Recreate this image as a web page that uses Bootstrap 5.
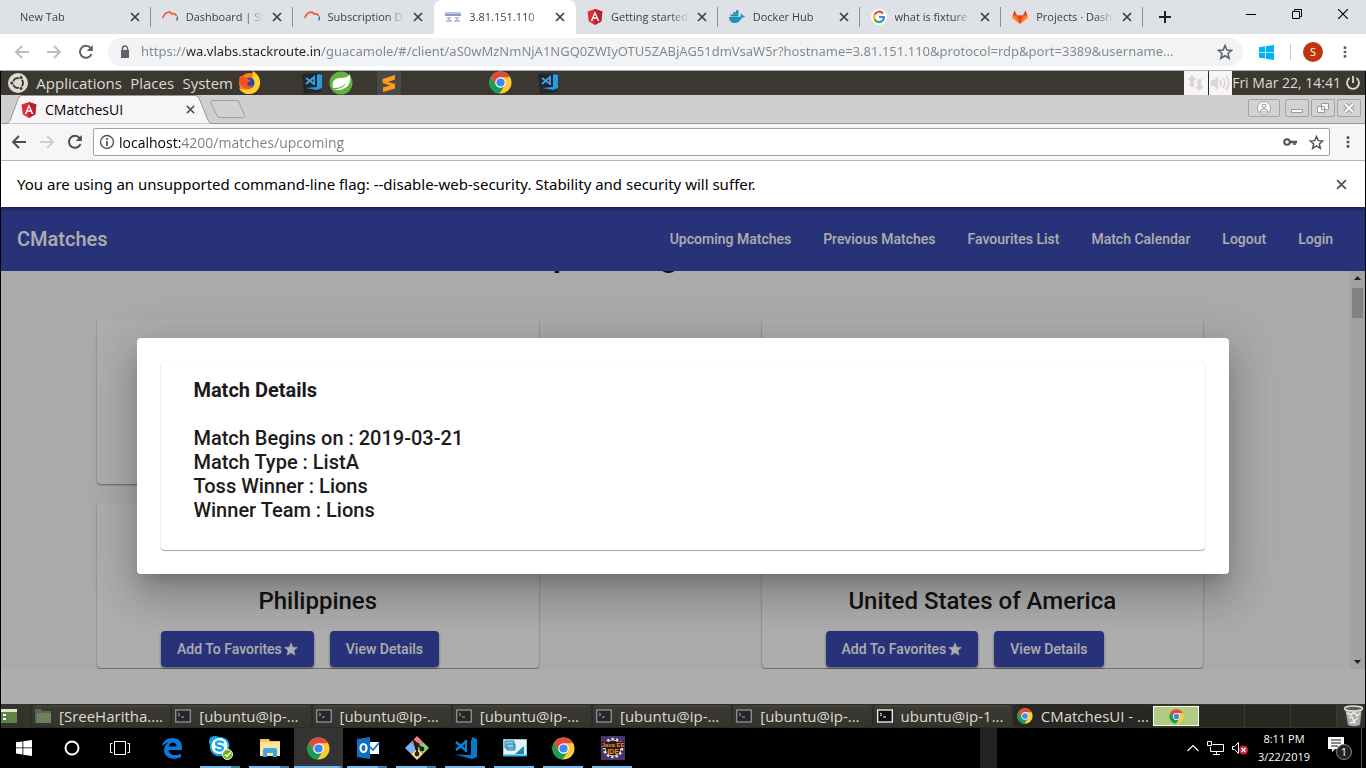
<!DOCTYPE html>
<html lang="en">
<head>
<meta charset="utf-8">
<meta name="viewport" content="width=device-width, initial-scale=1">
<title>CMatchesUI</title>
<link href="https://cdn.jsdelivr.net/npm/bootstrap@5.3.0/dist/css/bootstrap.min.css" rel="stylesheet">
<style>
  body { font-family: "Open Sans", sans-serif; background: #000; }
  svg { display: block; flex: none; }
  button { padding: 0; border: 0; background: none; color: inherit; }
  a { text-decoration: none; color: inherit; }

  /* outer browser */
  .tabstrip { height: 34px; background: #dee1e6; font-size: 11px; color: #3c4043; padding-left: 9px; }
  .tabset { flex: 0 1 1134px; min-width: 0; }
  .btab { flex: 1 1 0; min-width: 0; padding: 0 11px; position: relative; }
  .btab.ruled::after { content: ""; position: absolute; right: 0; top: 7px; height: 20px; width: 1px; background: #8b8f94; }
  .btab.active { background: #fff; border-radius: 8px 8px 0 0; }
  .tabname { flex: 1; min-width: 0; white-space: nowrap; overflow: hidden; -webkit-mask-image: linear-gradient(90deg, #000 75%, transparent); }
  .winctl { width: 46px; height: 28px; }
  .browserbar { height: 37px; background: #fff; border-bottom: 1px solid #a9abae; padding-right: 19px; padding-left: 14px; }
  .omni { height: 28px; border-radius: 14px; background: #f1f3f4; padding: 0 10px 0 9px; margin-left: -2px; }
  .address { border: 0; outline: 0; padding: 0; min-width: 0; color: transparent; -webkit-background-clip: text; background-clip: text; }
  .address-outer { font-family: "Noto Sans", sans-serif; font-size: 13px; background-image: linear-gradient(90deg, #80868b 46px, #202124 46px, #202124 180px, #80868b 180px); }
  .address-inner { font-size: 14px; background-image: linear-gradient(90deg, #000 62px, #7d7d7d 62px); }
  .avatar { width: 20px; height: 20px; background: #bf360c; color: #fff; font-size: 11px; }

  /* remote desktop */
  .remote { border-left: 1px solid #000; border-right: 1px solid #000; min-height: 0; }
  .toppanel { height: 24px; background: #3a3831; color: #dfdbd2; font-size: 15px; line-height: 20px; padding-bottom: 1px; }
  .datetime { font-size: 14px; }
  .menuset { width: 232px; padding-left: 7px; }
  .launch { width: 24px; height: 24px; }
  .tray { width: 24px; height: 24px; background: #f7f4f7; color: #dbd7d0; }
  .innertabs { height: 29px; background: #cfcfcf; border-bottom: 1px solid #979797; padding-left: 5px; }
  .innertab { width: 207px; height: 29px; position: relative; font-size: 14px; color: #000; }
  .innertab .shape { position: absolute; left: 0; top: 0; }
  .innertab .inside { position: relative; padding: 0 18px 0 15px; }
  .plus { margin-left: -3px; }
  .frames { gap: 2px; }
  .frame { height: 18px; width: 24px; border: 1px solid #a4a4a4; border-radius: 2px; background: #d2d2d2; color: #fff; }
  .frame-wide { width: 32px; margin-right: 3px; }
  .innerbar { height: 37px; background: #f8f5f8; border-bottom: 1px solid #b6b4b6; padding-left: 10px; padding-right: 11px; }
  .urlbox { height: 28px; border: 1px solid #a2a2a2; border-radius: 2px; background: #fff; padding: 0 5px; margin-left: 2px; }
  .infobar { font-family: "Noto Sans", sans-serif; height: 46px; background: #fff; color: #000; font-size: 15px; padding: 0 14px 0 16px; }

  /* web application */
  .app { font-family: Roboto, sans-serif; position: relative; background: #fff; min-height: 0; overflow: hidden; color: #1b1b1b; }
  .appnav { height: 64px; background: linear-gradient(#283573, #3c4bb3 5px); color: #fff; font-weight: 500; font-size: 14px; padding: 0 32px 0 16px; }
  .brand { font-size: 20px; }
  .viewport { background: #fdfafd; min-height: 0; overflow: hidden; }
  .listing { min-width: 0; padding: 0 147px 0 96px; }
  .listing h1 { font-size: 32px; line-height: 40px; font-weight: 700; margin: -35px -42px 43px 0; text-align: center; }
  .matchgrid { display: grid; grid-template-columns: 1fr 1fr; column-gap: 223px; row-gap: 19px; grid-auto-rows: 165px; }
  .matchcard { background: #fff; border-radius: 4px; box-shadow: 0 1px 2px 0 rgba(0,0,0,.45); padding: 0 64px 1px; }
  .matchcard h2 { font-size: 24px; line-height: 32px; font-weight: 500; margin: 0 0 14px; white-space: nowrap; text-align: center; }
  .actbtn { height: 36px; border-radius: 4px; background: #3c4bb3; color: #fff; font-size: 14px; font-weight: 500; padding: 0 16px; gap: 2px; white-space: nowrap; box-shadow: 0 2px 3px rgba(0,0,0,.4); }
  .rail { width: 15px; background: #f1eff1; color: #333; }
  .grip { width: 11px; height: 30px; background: #c1bfc1; }
  .pagefoot { height: 35px; background: #fff; }
  .shade { position: absolute; inset: 0; background: rgba(0,0,0,.32); }
  .dialogbox { width: 80%; background: #fff; border-radius: 4px; padding: 24px; box-shadow: 0 11px 15px -7px rgba(0,0,0,.2), 0 24px 38px 3px rgba(0,0,0,.14), 0 9px 46px 8px rgba(0,0,0,.12); }
  .detail { border-radius: 4px; padding: 16px 32px 28px; font-size: 20px; line-height: 24px; font-weight: 500; box-shadow: 0 1px 1px rgba(0,0,0,.35), 0 0 1px rgba(0,0,0,.2); }
  .detail h2 { font-size: 20px; line-height: 24px; font-weight: 700; margin-bottom: 24px; }

  /* remote desktop window list */
  .winlist { height: 24px; background: #33322b; color: #dfdbd2; font-size: 15px; line-height: 20px; }
  .task { flex: 1 1 0; min-width: 0; height: 24px; border: 1px solid #2c2b26; border-radius: 4px; background: linear-gradient(#46443c, #3a3832 4px, #35332e); padding: 0 3px; white-space: nowrap; }
  .task.current { background: #282723; }
  .taskset { flex: 0 1 1122px; min-width: 0; }
  .space { width: 46px; height: 22px; background: #282822; border-right: 1px solid #3b3a33; }
  .space.current { height: 20px; background: #afcd80; border: 1px solid #fff; }

  /* host taskbar */
  .hostbar { height: 40px; background: #000; color: #fff; font-size: 11px; }
  .sys { width: 48px; height: 40px; }
  .pins { margin-left: 3px; }
  .pin { width: 49px; height: 40px; position: relative; }
  .pin.open::after { content: ""; position: absolute; left: 4px; bottom: 0; width: 40px; height: 2px; background: #76b9ed; }
  .pin.multi::after { background: linear-gradient(90deg, #76b9ed 31px, #4c7ba0 31px); }
  .pin.front { background: #333; }
  .pin.front::after { left: 0; width: 48px; background: linear-gradient(90deg, #76b9ed 45px, #5a8fb9 45px); }
  .stub { width: 17px; background: #232323; margin-right: 186px; }
  .clock { width: 62px; line-height: 18px; text-align: center; }
  .edge { width: 1px; height: 40px; background: #555; }
</style>
</head>
<body class="vh-100 d-flex flex-column overflow-hidden">

<svg width="0" height="0" class="position-absolute" aria-hidden="true">
  <symbol id="x" viewBox="0 0 10 10"><path d="M1 1 9 9M9 1 1 9" stroke="currentColor" stroke-width="1.7" fill="none"/></symbol>
  <symbol id="route" viewBox="0 0 16 16"><path d="M.5 9C1.500 8 2 5 4.500 3.800 7 2.600 9 3.200 10 5c1.500-.5 3.500-.3 4.500 2" fill="none" stroke="#f4592b" stroke-width="1.700"/><path d="M15 7.500c.7 1.500.3 2.800-.4 4" stroke="#3c7288" stroke-width="1.400" fill="none"/></symbol>
  <symbol id="fwd" viewBox="0 0 16 16"><path d="M1 8h13M8 2l6 6-6 6" fill="none" stroke="currentColor" stroke-width="1.900"/></symbol>
  <symbol id="back" viewBox="0 0 16 16"><path d="M15 8H2M8 2 2 8l6 6" fill="none" stroke="currentColor" stroke-width="1.900"/></symbol>
  <symbol id="reload" viewBox="0 0 16 16"><path d="M13.500 10.200A6 6 0 1 1 12.600 4" fill="none" stroke="currentColor" stroke-width="2"/><path d="M14.800 1v6h-6z" fill="currentColor"/></symbol>
  <symbol id="star" viewBox="0 0 16 16"><path d="m8 1.600 1.900 4.400 4.700.4-3.600 3.100 1.100 4.700L8 11.700l-4.100 2.500L5 9.500 1.400 6.400l4.700-.4z" fill="none" stroke="currentColor" stroke-width="1.600"/></symbol>
  <symbol id="starfull" viewBox="0 0 16 16"><path d="m8 1 2 4.900 5.300.4-4 3.500 1.200 5.200L8 12.200 3.500 15l1.200-5.200-4-3.500L6 5.900z" fill="currentColor" stroke="currentColor" stroke-width=".6"/></symbol>
  <symbol id="dots" viewBox="0 0 4 16"><path d="M.5 1.500h3v3h-3zM.5 6.500h3v3h-3zM.5 11.500h3v3h-3z" fill="currentColor"/></symbol>
  <symbol id="ng" viewBox="0 0 16 16"><path d="M8 0l7.400 2.600-1.100 9.600L8 16l-6.300-3.800L.6 2.600z" fill="#dd2c3a"/><path d="M8 0v16l6.300-3.800 1.100-9.600z" fill="#b9202f"/><path d="M8 2.200 3.700 12h1.700l.9-2.200h3.400l.9 2.200h1.700zm0 3 1.200 3.100H6.800z" fill="#fff"/></symbol>
  <symbol id="chrome" viewBox="0 0 24 24"><circle cx="12" cy="12" r="11.500" fill="#fc3"/><path d="M2 6.300A11.500 11.500 0 0 1 22 6.500H12L7 15z" fill="#dd4b3e"/><path d="M2 6.300A11.500 11.500 0 0 0 11 23.500L16.500 15 7 14.700z" fill="#149e5a"/><circle cx="12" cy="12" r="5.500" fill="#fff"/><circle cx="12" cy="12" r="4.300" fill="#4285f4"/></symbol>
  <symbol id="code" viewBox="0 0 24 24"><path d="M18 1l5 2v18l-5 2L1 18.500l16 .5V6z" fill="#0b78c8"/><path d="M2 6 13 15.500M2 14 13 4.500" fill="none" stroke="#0b7fd3" stroke-width="2.500"/><path d="M12 4v12" stroke="#0b7fd3" stroke-width="2"/></symbol>
  <symbol id="codedark" viewBox="0 0 24 24"><path d="M1 3l18-1 1 19-17 2z" fill="#23272b"/><path d="M17 3l4 1v13l-5 2-11-2 11-1V4z" fill="#269be6"/><path d="M5 7l8 6M5 13l8-7v8" fill="none" stroke="#3ba4e8" stroke-width="1.800"/></symbol>
  <symbol id="term" viewBox="0 0 16 14"><rect x=".7" y="1" width="14.600" height="12" fill="#24262a" stroke="#8d8c88" stroke-width="1.400"/><path d="m3 4 2 1.500L3 7M6 8h3" fill="none" stroke="#aaa"/></symbol>
  <symbol id="winlogo" viewBox="0 0 16 16"><path d="M0 2.300 6.500 1.400v6.100H0zM7.300 1.300 16 0v7.500H7.300zM0 8.300h6.500v6.200L0 13.600zM7.300 8.300H16V16l-8.700-1.300z" fill="currentColor"/></symbol>
</svg>

<!-- outer browser tabs -->
<header class="tabstrip d-flex flex-shrink-0">
  <div class="tabset d-flex">
    <div class="btab ruled d-flex align-items-center gap-2"><span class="tabname">New Tab</span><button aria-label="Close tab"><svg width="10" height="10"><use href="#x"/></svg></button></div>
    <div class="btab ruled d-flex align-items-center gap-2"><svg width="16" height="16"><use href="#route"/></svg><span class="tabname">Dashboard | St</span><button aria-label="Close tab"><svg width="10" height="10"><use href="#x"/></svg></button></div>
    <div class="btab d-flex align-items-center gap-2"><svg width="16" height="16"><use href="#route"/></svg><span class="tabname">Subscription D</span><button aria-label="Close tab"><svg width="10" height="10"><use href="#x"/></svg></button></div>
    <div class="btab active d-flex align-items-center gap-2"><svg width="16" height="16" viewBox="0 0 16 16"><path d="M0 5h16v2H0z" fill="#8f9cc9"/><path d="M0 4h16M2 9h4M10 9h4M1 12h6M9 12h6M4 9v3M12 9v3" stroke="#a9b4d9" stroke-width="1.300"/></svg><span class="tabname">3.81.151.110</span><button aria-label="Close tab"><svg width="10" height="10"><use href="#x"/></svg></button></div>
    <div class="btab ruled d-flex align-items-center gap-2"><svg width="16" height="16"><use href="#ng"/></svg><span class="tabname">Getting started</span><button aria-label="Close tab"><svg width="10" height="10"><use href="#x"/></svg></button></div>
    <div class="btab ruled d-flex align-items-center gap-2"><svg width="16" height="16" viewBox="0 0 16 16"><path d="M0 8h11c1-1 .5-2.500 1-3.500 1 .5 1.500 1.500 1.500 2 1 0 2 0 2.500.5-.5 1-1.500 1.500-3 1.500C11.500 12 9 14 5.500 14 2 14 0 11.500 0 8z" fill="#1c93ba"/><path d="M1.500 5.500h8v2h-8zM4 3.300h5.500v2H4zM7 1.300h2.500v2H7z" fill="#2c8ca8"/></svg><span class="tabname">Docker Hub</span><button aria-label="Close tab"><svg width="10" height="10"><use href="#x"/></svg></button></div>
    <div class="btab ruled d-flex align-items-center gap-2"><svg width="16" height="16" viewBox="0 0 16 16"><circle cx="8" cy="8" r="8" fill="#fff"/><g fill="none" stroke-width="2.200"><path d="M12 4.500A5 5 0 0 0 3.600 5.700" stroke="#ea4335"/><path d="M3.600 5.700a5 5 0 0 0 0 4.600" stroke="#fbbc05"/><path d="M3.600 10.300a5 5 0 0 0 7.800 1.500" stroke="#34a853"/><path d="M11.400 11.800A5 5 0 0 0 13 8H8" stroke="#4285f4"/></g></svg><span class="tabname">what is fixture</span><button aria-label="Close tab"><svg width="10" height="10"><use href="#x"/></svg></button></div>
    <div class="btab ruled d-flex align-items-center gap-2"><svg width="16" height="16" viewBox="0 0 16 16"><path d="M0 9 2.500 1.500 5 6.500h6l2.500-5L16 9l-8 6z" fill="#fc6d26"/><path d="M5 6.500h6L8 15zM2.500 1.500 5 6.500H.8zM13.500 1.500 11 6.500h4.200z" fill="#e24329"/><path d="M0 9l.8-2.500L8 15zM16 9l-.8-2.500L8 15z" fill="#fca326"/></svg><span class="tabname">Projects · Dash</span><button aria-label="Close tab"><svg width="10" height="10"><use href="#x"/></svg></button></div>
  </div>
  <button class="ms-3 align-self-center" aria-label="New tab"><svg width="12" height="12" viewBox="0 0 12 12"><path d="M6 0v12M0 6h12" stroke="#222" stroke-width="2"/></svg></button>
  <div class="ms-auto d-flex">
    <button class="winctl d-flex align-items-center justify-content-center" aria-label="Minimize"><svg width="10" height="10" viewBox="0 0 10 10"><path d="M0 5.500h10" stroke="#000"/></svg></button>
    <button class="winctl d-flex align-items-center justify-content-center" aria-label="Restore"><svg width="10" height="10" viewBox="0 0 10 10"><path d="M.5 2.500h7v7h-7zM2.500 2V.5h7v7H8" stroke="#000" fill="none"/></svg></button>
    <button class="winctl d-flex align-items-center justify-content-center" aria-label="Close"><svg width="10" height="10" viewBox="0 0 10 10"><path d="M0 0l10 10M10 0 0 10" stroke="#000" stroke-width="1.200"/></svg></button>
  </div>
</header>

<!-- outer browser toolbar -->
<div class="browserbar d-flex align-items-center flex-shrink-0">
  <button class="me-3" aria-label="Back" style="color:#bbbdc0"><svg width="16" height="16"><use href="#back"/></svg></button>
  <button class="me-3" aria-label="Forward" style="color:#bbbdc0"><svg width="16" height="16"><use href="#fwd"/></svg></button>
  <button class="me-3" aria-label="Reload" style="color:#5f6368"><svg width="16" height="16"><use href="#reload"/></svg></button>
  <div class="omni d-flex align-items-center flex-fill gap-2">
    <svg width="16" height="16" viewBox="0 0 16 16"><path d="M4 6h8v8H4z" fill="#5f6368"/><path d="M5.500 6V4.500a2.500 2.500 0 0 1 5 0V6" fill="none" stroke="#5f6368" stroke-width="1.500"/></svg>
    <input class="address address-outer flex-fill" aria-label="Address" value="https://wa.vlabs.stackroute.in/guacamole/#/client/aS0wMzNmNjA1NGQ0ZWIyOTU5ZABjAG51dmVsaW5r?hostname=3.81.151.110&amp;protocol=rdp&amp;port=3389&amp;username...">
    <button aria-label="Bookmark" style="color:#5f6368"><svg width="16" height="16"><use href="#star"/></svg></button>
  </div>
  <svg class="ms-3" width="15" height="15" style="color:#00b4f0"><use href="#winlogo"/></svg>
  <span class="vr align-self-center ms-3 me-2" style="height:16px"></span>
  <span class="avatar rounded-circle d-flex align-items-center justify-content-center ms-1 me-3">S</span>
  <button class="ms-1" aria-label="Menu" style="color:#5f6368"><svg width="4" height="14"><use href="#dots"/></svg></button>
</div>

<main class="remote d-flex flex-column flex-fill">
  <!-- desktop panel -->
  <div class="toppanel d-flex align-items-center flex-shrink-0">
    <div class="menuset d-flex align-items-center justify-content-between">
      <svg width="20" height="20" viewBox="0 0 20 20"><circle cx="10" cy="10" r="10" fill="#dfdbd2"/><circle cx="10" cy="10" r="5" fill="none" stroke="#3a3831" stroke-width="2"/><g fill="#3a3831" stroke="#dfdbd2"><circle cx="3.800" cy="10" r="2"/><circle cx="13" cy="4.600" r="2"/><circle cx="13" cy="15.400" r="2"/></g></svg>
      <button>Applications</button><button>Places</button><button>System</button>
    </div>
    <button class="launch ms-1" aria-label="Firefox"><svg width="24" height="24" viewBox="0 0 24 24"><circle cx="12.500" cy="12.500" r="10.500" fill="#fd7d1a"/><path d="M16 0c6 4 7.500 8 7 13-1 6-6 10-11 10-4 0-8-2-10-6 8 4 16 0 15-6-.5-3-2.500-6-1-11z" fill="#ffd02e"/><circle cx="12" cy="12" r="5.500" fill="#2047b6"/><path d="M3 5c3 0 6 1 8 3l3 2-4 2c0 3 3 4 6 2-1 4-6 5-9 3C3 15 1 10 3 5z" fill="#f9521e"/></svg></button>
    <div class="d-flex ms-4 ps-3">
      <button class="launch" aria-label="Code"><svg width="24" height="24"><use href="#codedark"/></svg></button>
      <button class="launch ms-1" aria-label="Spring"><svg width="24" height="24" viewBox="0 0 24 24"><circle cx="12" cy="12" r="11.500" fill="#62b23e"/><path d="M21 3c1 8-1 13-7 15-4 1.500-8 1-10 1 7-1 11-3 13-7-4 4-7 5-13 5C2 9 7 7 12 7c4 0 7-1 9-4z" fill="#fff"/></svg></button>
    </div>
    <button class="launch ms-4" aria-label="Sublime Text"><svg width="24" height="24" viewBox="0 0 24 24"><rect width="24" height="24" rx="2" fill="#4a4946"/><path d="M5.500 8 18 4v4.500L11 11l7 2v4.500L6 21v-4.500l7-2-7.500-2.500z" fill="#ff9a1a"/></svg></button>
    <div class="d-flex ms-5 ps-4 gap-4"><button class="launch ms-3" aria-label="Chrome"><svg width="23" height="23"><use href="#chrome"/></svg></button>
    <button class="launch" aria-label="Code"><svg width="24" height="24"><use href="#codedark"/></svg></button></div>
    <div class="ms-auto d-flex align-items-center">
      <span class="tray d-flex align-items-center justify-content-center"><svg width="20" height="20" viewBox="0 0 20 20"><path d="M6 2 1.500 7H4v7h4V7h2.500zM13.500 18 9 13.500h2.500V6h4v7.500H18z" fill="currentColor"/></svg></span>
      <span class="tray d-flex align-items-center justify-content-center border-start border-dark"><svg width="20" height="18" viewBox="0 0 20 18"><path d="M0 6h3l4-4v14l-4-4H0z" fill="currentColor"/><path d="M9 6q2 3 0 6M12 4q4 5 0 10M15 2q5.500 7 0 14" fill="none" stroke="currentColor" stroke-width="1.700"/></svg></span>
      <span class="datetime text-nowrap">Fri Mar 22, 14:41</span>
      <button class="ms-1 me-1" aria-label="Power"><svg width="16" height="16" viewBox="0 0 16 16"><path d="M4.500 3a6 6 0 1 0 7 0M8 1v7" fill="none" stroke="#dfdbd2" stroke-width="1.800"/></svg></button>
    </div>
  </div>

  <!-- inner browser -->
  <div class="innertabs d-flex flex-shrink-0">
    <div class="innertab"><svg class="shape" width="207" height="29" viewBox="0 0 207 29"><path d="M0 28.500c2 0 3-1 4-3L12.500 3q1-2.500 3.500-2.500h173q3 0 4 2.500l9 22c1 2.500 2 3.500 4 3.500" fill="#f8f5f8" stroke="#979797"/></svg>
      <div class="inside d-flex align-items-center h-100"><svg width="16" height="16"><use href="#ng"/></svg><span class="ms-1 ps-1 flex-fill">CMatchesUI</span><button style="color:#555" aria-label="Close tab"><svg width="9" height="9"><use href="#x"/></svg></button></div></div>
    <button class="align-self-center plus" aria-label="New tab"><svg width="36" height="18" viewBox="0 0 36 18"><path d="M3 .5h25l6.500 14q1 3-2 3H10q-2 0-3-2L1 3Q.5.5 3 .5z" fill="#d3d0d3" stroke="#a0a0a0"/></svg></button>
    <div class="frames ms-auto d-flex me-1 pt-1">
      <button class="frame frame-wide d-flex align-items-center justify-content-center" aria-label="Profile"><svg width="14" height="14" viewBox="0 0 14 14"><circle cx="7" cy="7" r="6.500" fill="#fff" stroke="#a4a4a4"/><circle cx="7" cy="5" r="2" fill="none" stroke="#999"/><path d="M3 11q0-3 4-3t4 3z" fill="none" stroke="#999"/></svg></button>
      <button class="frame d-flex align-items-center justify-content-center" aria-label="Minimize"><svg width="12" height="12" viewBox="0 0 12 12"><path d="M.5 7.500h11v3H.5z" fill="#fff" stroke="#999"/></svg></button>
      <button class="frame d-flex align-items-center justify-content-center" aria-label="Restore"><svg width="12" height="12" viewBox="0 0 12 12"><path d="M4.500 1.500h7v6h-7zM.5 4.500h7v6h-7z" fill="#fff" stroke="#999"/></svg></button>
      <button class="frame d-flex align-items-center justify-content-center" aria-label="Close"><svg width="12" height="12" viewBox="0 0 12 12"><path d="M2 2l8 8M10 2l-8 8" stroke="#999" stroke-width="4"/><path d="M2 2l8 8M10 2l-8 8" stroke="#fff" stroke-width="2"/></svg></button>
    </div>
  </div>
  <div class="innerbar d-flex align-items-center flex-shrink-0">
    <button style="color:#4c4c4c" aria-label="Back"><svg width="16" height="16"><use href="#back"/></svg></button>
    <button class="mx-2 px-1" style="color:#cfcdcf" aria-label="Forward"><svg width="16" height="16"><use href="#fwd"/></svg></button>
    <button class="me-2" style="color:#4c4c4c" aria-label="Reload"><svg width="16" height="16"><use href="#reload"/></svg></button>
    <div class="urlbox d-flex align-items-center flex-fill">
      <svg width="16" height="16" viewBox="0 0 16 16"><circle cx="8" cy="8" r="6.500" fill="none" stroke="#555" stroke-width="1.400"/><path d="M8 7v5M8 4v2" stroke="#555" stroke-width="1.700"/></svg>
      <input class="address address-inner flex-fill ms-1" aria-label="Page address" value="localhost:4200/matches/upcoming">
      <svg width="14" height="14" viewBox="0 0 14 14"><circle cx="4" cy="7" r="2.800" fill="none" stroke="#555" stroke-width="2"/><path d="M6.500 7H14M11.500 7v3" stroke="#555" stroke-width="2.400"/></svg>
      <button class="ms-2 ps-1" style="color:#555" aria-label="Bookmark"><svg width="15" height="15"><use href="#star"/></svg></button>
    </div>
    <button class="ms-3 me-1" style="color:#555" aria-label="Menu"><svg width="4" height="14"><use href="#dots"/></svg></button>
  </div>
  <div class="infobar d-flex align-items-center justify-content-between flex-shrink-0">
    <span>You are using an unsupported command-line flag: --disable-web-security. Stability and security will suffer.</span>
    <button class="me-1" style="color:#555" aria-label="Dismiss"><svg width="11" height="11"><use href="#x"/></svg></button>
  </div>

  <!-- application -->
  <div class="app d-flex flex-column flex-fill">
    <nav class="appnav d-flex align-items-center justify-content-between flex-shrink-0">
      <a class="brand" href="#">CMatches</a>
      <div class="d-flex" style="gap:32px"><a href="#">Upcoming Matches</a><a href="#">Previous Matches</a><a href="#">Favourites List</a><a href="#">Match Calendar</a><a href="#">Logout</a><a href="#">Login</a></div>
    </nav>
    <div class="viewport d-flex flex-fill">
      <div class="listing flex-fill">
        <h1>Upcoming Matches</h1>
        <div class="matchgrid">
          <section class="matchcard"></section>
          <section class="matchcard"></section>
          <section class="matchcard d-flex flex-column justify-content-end">
            <h2>Philippines</h2>
            <div class="d-flex gap-3"><button class="actbtn d-flex align-items-center">Add To Favorites<svg width="14" height="14"><use href="#starfull"/></svg></button><button class="actbtn">View Details</button></div>
          </section>
          <section class="matchcard d-flex flex-column justify-content-end">
            <h2>United States of America</h2>
            <div class="d-flex gap-3"><button class="actbtn d-flex align-items-center">Add To Favorites<svg width="14" height="14"><use href="#starfull"/></svg></button><button class="actbtn">View Details</button></div>
          </section>
        </div>
      </div>
      <div class="rail d-flex flex-column align-items-center justify-content-between flex-shrink-0">
        <div><svg class="mx-auto mt-1 mb-2" width="7" height="5" viewBox="0 0 7 5"><path d="M0 5h7L3.500 1z" fill="#333"/></svg><div class="grip"></div></div>
        <svg class="mb-1" width="7" height="5" viewBox="0 0 7 5"><path d="M0 0h7L3.500 4z" fill="#333"/></svg>
      </div>
    </div>
    <div class="pagefoot flex-shrink-0"></div>
    <div class="shade d-flex align-items-center justify-content-center">
      <div class="dialogbox" role="dialog" aria-labelledby="dlg">
        <div class="detail">
          <h2 id="dlg">Match Details</h2>
          <div>Match Begins on : 2019-03-21</div>
          <div>Match Type : ListA</div>
          <div>Toss Winner : Lions</div>
          <div>Winner Team : Lions</div>
        </div>
      </div>
    </div>
  </div>

  <!-- window list -->
  <div class="winlist d-flex align-items-center flex-shrink-0">
    <button class="me-2" aria-label="Show desktop"><svg width="18" height="18" viewBox="0 0 18 18"><path d="M0 2h16v14H0z" fill="#5d8445"/><path d="M0 2h16v3H0z" fill="#dfe5c8"/><path d="M2 7h3v2H2zM2 11h3v2H2z" fill="#fff"/></svg></button>
    <div class="taskset d-flex ms-1">
      <button class="task d-flex align-items-center gap-2"><svg width="16" height="14" viewBox="0 0 16 14"><path d="M0 0h6l1 2h9v12H0z" fill="#556b4b"/><path d="M2 4h14v10H2z" fill="#6a8259"/></svg><span>[SreeHaritha....</span></button>
      <button class="task d-flex align-items-center gap-2"><svg width="16" height="14"><use href="#term"/></svg><span>[ubuntu@ip-...</span></button>
      <button class="task d-flex align-items-center gap-2"><svg width="16" height="14"><use href="#term"/></svg><span>[ubuntu@ip-...</span></button>
      <button class="task d-flex align-items-center gap-2"><svg width="16" height="14"><use href="#term"/></svg><span>[ubuntu@ip-...</span></button>
      <button class="task d-flex align-items-center gap-2"><svg width="16" height="14"><use href="#term"/></svg><span>[ubuntu@ip-...</span></button>
      <button class="task d-flex align-items-center gap-2"><svg width="16" height="14"><use href="#term"/></svg><span>[ubuntu@ip-...</span></button>
      <button class="task d-flex align-items-center gap-2"><svg width="16" height="14" viewBox="0 0 16 14"><rect x=".7" y="1" width="14.600" height="12" fill="#0c0d0f" stroke="#e8e8e6" stroke-width="1.400"/><path d="m3 4 2 1.500L3 7M6 8h3" fill="none" stroke="#fff"/></svg><span>ubuntu@ip-1...</span></button>
      <button class="task current d-flex align-items-center gap-2"><svg width="16" height="16"><use href="#chrome"/></svg><span>CMatchesUI - ...</span></button>
    </div>
    <div class="d-flex align-items-center">
      <button class="space current d-flex align-items-center justify-content-center" aria-label="Workspace 1"><svg width="15" height="15"><use href="#chrome"/></svg></button>
      <button class="space" aria-label="Workspace 2"></button><button class="space" aria-label="Workspace 3"></button><button class="space" aria-label="Workspace 4"></button>
    </div>
    <button class="ms-auto" aria-label="Trash"><svg width="22" height="22" viewBox="0 0 22 22"><path d="M2 3h17l-2 17q-6 2.500-12 0z" fill="#a9a9a7"/><ellipse cx="10.500" cy="3.500" rx="9" ry="2.500" fill="#5c5c5a" stroke="#ddd" stroke-width="1.500"/><path d="M4 8l4 2 3-3 3 4 3-3M6 13l3-1 2 4 4-3M7 18l3-1 3 1" fill="none" stroke="#eee" stroke-width="1.500"/></svg></button>
  </div>
</main>

<!-- host taskbar -->
<footer class="hostbar d-flex flex-shrink-0">
  <button class="sys d-flex align-items-center justify-content-center" aria-label="Start"><svg width="16" height="16"><use href="#winlogo"/></svg></button>
  <button class="sys d-flex align-items-center justify-content-center" aria-label="Search"><svg width="16" height="16" viewBox="0 0 16 16"><circle cx="8" cy="8" r="6.500" fill="none" stroke="#fff" stroke-width="2"/></svg></button>
  <button class="sys d-flex align-items-center justify-content-center" aria-label="Task view"><svg width="20" height="14" viewBox="0 0 20 14"><path d="M4.500.5h11v13h-11zM2.500 2.500h-2v9h2M17.500 2.500h2v9h-2" fill="none" stroke="#fff"/></svg></button>
  <div class="pins d-flex">
  <button class="pin d-flex align-items-center justify-content-center" aria-label="Edge"><svg width="22" height="22" viewBox="0 0 22 22"><path d="M1 9.500C2 4 6 1 11.500 1 17.500 1 21 5 21 10v3H7.500c.5 3.500 3 5 6.500 5 2.500 0 4.500-.7 6-1.600V20c-2 1-4.300 1.700-7 1.700C7 21.700 3 18 3 13c0-3.500 2-6 5-7.500C5 6 2.500 7.500 1 9.500zM8 9.500h7.500C15.500 7 14 5.500 12 5.500S8.300 7 8 9.500z" fill="#0b7bdb"/></svg></button>
  <button class="pin open multi d-flex align-items-center justify-content-center" aria-label="Skype"><svg width="24" height="24" viewBox="0 0 24 24"><path d="M2 1q4-2 8 0c7-1 12 5 10 11 2 5-2 10-8 8C5 21 0 16 1 9-1 6 0 3 2 1z" fill="#12a5e7"/><circle cx="10.500" cy="10" r="8" fill="#fff"/><path d="M14.500 7.300q-1-2-4-2C6.500 5.300 6 9 9.200 9.700l2.800.6c3.300.8 2 4.200-1.500 4.200q-3 0-4-2.300" fill="none" stroke="#12a5e7" stroke-width="2.300"/><circle cx="18.500" cy="18.500" r="5" fill="#6bb700" stroke="#fff"/><path d="m16 18.500 2 2 3.500-4" fill="none" stroke="#fff" stroke-width="1.500"/></svg></button>
  <button class="pin open multi d-flex align-items-center justify-content-center" aria-label="File Explorer"><svg width="22" height="20" viewBox="0 0 22 20"><path d="M1 1h9l1 2h10v14H1z" fill="#f2c94f"/><path d="M1 4h20v14H1z" fill="#fde49a"/><path d="M4 19v-7q0-2 2-2h10q2 0 2 2v7h-4v-4H8v4z" fill="#3aa7e0"/></svg></button>
  <button class="pin open front d-flex align-items-center justify-content-center" aria-label="Chrome"><svg width="23" height="23"><use href="#chrome"/></svg></button>
  <button class="pin open multi d-flex align-items-center justify-content-center" aria-label="Outlook"><svg width="24" height="24" viewBox="0 0 24 24"><path d="M12 6h11v12H12z" fill="#fff"/><path d="m13 10 4 4 6-7" fill="none" stroke="#0d6fc5" stroke-width="1.700"/><path d="M1 3 14 1v22L1 21z" fill="#0d6fc5"/><ellipse cx="7.500" cy="12" rx="3" ry="4" fill="none" stroke="#fff" stroke-width="2.200"/></svg></button>
  <button class="pin open multi d-flex align-items-center justify-content-center" aria-label="Git"><svg width="24" height="24" viewBox="0 0 24 24"><path d="m12 0 6 6-6 6-6-6z" fill="#f47f84"/><path d="m18 6 6 6-6 6-6-6z" fill="#8bd66a"/><path d="m6 6 6 6-6 6-6-6z" fill="#7fb0fb"/><path d="m12 12 6 6-6 6-6-6z" fill="#fbe17b"/><path d="M8 4l4 4v11M12 8l5 5" stroke="#222" stroke-width="2"/><circle cx="12" cy="9" r="2.400" fill="#222"/><circle cx="12" cy="18" r="2.400" fill="#222"/><circle cx="17" cy="13" r="2.400" fill="#222"/></svg></button>
  <button class="pin open d-flex align-items-center justify-content-center" aria-label="Code"><svg width="24" height="24"><use href="#code"/></svg></button>
  <button class="pin open d-flex align-items-center justify-content-center" aria-label="Remote desktop"><svg width="24" height="18" viewBox="0 0 24 18"><path d="M.5.500h23v16H.5z" fill="#e4f3f9" stroke="#9ac8da"/><path d="M2 2h9v7H2zM4 5h8v6H4z" fill="#8ccbe1" stroke="#2385a8"/><path d="M12 15 21 7v8z" fill="#2385a8"/><path d="M.5 16.500h23" stroke="#35b3df" stroke-width="2"/></svg></button>
  <button class="pin open d-flex align-items-center justify-content-center" aria-label="Chrome"><svg width="23" height="23"><use href="#chrome"/></svg></button>
  <button class="pin open d-flex align-items-center justify-content-center" aria-label="Java EE IDE"><svg width="24" height="24" viewBox="0 0 24 24"><rect width="24" height="24" fill="#4b3268"/><circle cx="12" cy="12" r="9" fill="#251b22" stroke="#ddd" stroke-width="2.500" stroke-dasharray="2.500 2"/><circle cx="12" cy="12" r="8" fill="none" stroke="#c9c9c9"/><path d="M1 6h22v6H1zM6 12h12v6H6z" fill="#251b22"/><text x="12" y="11" font-family="Liberation Sans" font-size="6" font-weight="bold" text-anchor="middle" fill="#f28a1c">Java EE</text><text x="12" y="18" font-family="Liberation Sans" font-size="7" font-weight="bold" text-anchor="middle" fill="#f28a1c">IDE</text></svg></button>
  </div>
  <div class="ms-auto d-flex align-items-center">
    <div class="stub h-100"></div>
    <button class="me-2 ms-1" aria-label="Hidden icons"><svg width="12" height="8" viewBox="0 0 12 8"><path d="m.5 7 5.500-5.500L11.500 7" fill="none" stroke="#fff" stroke-width="1.200"/></svg></button>
    <svg width="17" height="14" viewBox="0 0 17 14"><path d="M5.500 3.500h11v7H3.500V6M.5.500h4v4h-4zM6 13.500h7M9.500 11v2" fill="none" stroke="#fff"/></svg>
    <svg class="ms-2" width="17" height="14" viewBox="0 0 17 14"><path d="M.5 5.500h2l4-4v11l-4-4h-2z" fill="none" stroke="#fff"/><circle cx="11.500" cy="9" r="4.500" fill="#d8202f"/><path d="m9.500 7 4 4M13.500 7l-4 4" stroke="#fff" stroke-width="1.300"/></svg>
    <div class="clock ms-1">8:11 PM<br>3/22/2019</div>
    <button class="ms-2 ps-1" aria-label="Notifications"><svg width="26" height="26" viewBox="0 0 26 26"><path d="M1 2h16v12H8l-3 3v-3H1z" fill="#fff"/><path d="M4 5h10M4 8h10M4 11h7" stroke="#111"/><circle cx="17" cy="17" r="7.500" fill="#222" stroke="#888"/><text x="17" y="21" font-family="Open Sans" font-size="11" text-anchor="middle" fill="#fff">1</text></svg></button>
    <div class="edge ms-2 me-1"></div>
  </div>
</footer>
<script src="https://cdn.jsdelivr.net/npm/bootstrap@5.3.0/dist/js/bootstrap.bundle.min.js"></script>
</body>
</html>
